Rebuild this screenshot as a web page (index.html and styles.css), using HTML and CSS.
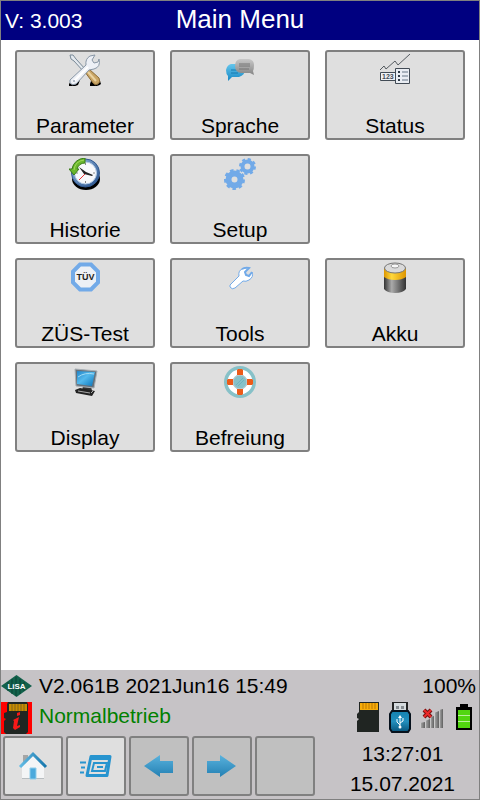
FILE: index.html
```
<!DOCTYPE html>
<html lang="de">
<head>
  <meta charset="UTF-8">
  <meta name="viewport" content="width=device-width, initial-scale=1.0">
  <title>Main Menu</title>
  <link rel="stylesheet" href="styles.css">
</head>
<body>
  <header class="titlebar">
    <span class="version">V: 3.003</span>
    <h1>Main Menu</h1>
  </header>

  <main class="menu">
    <button class="tile" type="button">
      <svg class="icon" viewBox="0 0 32 32" aria-hidden="true">
        <path d="M0 30l3-4h8l-2 5q-4 2-9 1zM21 30l1-3h9l1 3q-3 3-11 2z" fill="#000"/>
        <path d="M1 1l3 0 3 4 10 11-2 2L5 7 2 5z" fill="#e4e9ee" stroke="#788896"/>
        <path d="M16 18l4-3 10 9q2 4-1 6t-5-1z" fill="#c9a565" stroke="#8c6c38"/>
        <path d="M19 18l8 9" stroke="#ead2a0" stroke-width="2"/>
        <path d="M1 26L17 11q-1-6 4-9l5-1-3 5 2 3 4-1 1-3q2 8-5 10l-5 1L7 30q-4 2-6-1z" fill="#edf0f6" stroke="#8997a6"/>
        <path d="M4 28l15-15" stroke="#fff" stroke-width="2"/>
        <circle cx="5" cy="27" r="1" fill="#99a4b5"/>
      </svg>
      <span>Parameter</span>
    </button>
    <button class="tile" type="button">
      <svg class="icon" viewBox="0 0 32 32" aria-hidden="true">
        <defs>
          <linearGradient id="bubbleBlue" x1="0" y1="0" x2="0" y2="1"><stop offset="0" stop-color="#65c6ec"/><stop offset="1" stop-color="#1687c4"/></linearGradient>
          <linearGradient id="bubbleGray" x1="0" y1="0" x2="0" y2="1"><stop offset="0" stop-color="#c8c8c8"/><stop offset="1" stop-color="#858585"/></linearGradient>
        </defs>
        <path d="M7 10h9q5 1 5 6t-6 7H8l-4 4v-5q-2-2-2-6 1-5 5-6z" fill="url(#bubbleBlue)"/>
        <path d="M7 16h7M7 19h7" stroke="#167bb0"/>
        <path d="M16 5h9q5 1 5 6 0 4-1 6l1 4-4-2h-9q-6-1-6-7 0-6 5-7z" fill="url(#bubbleGray)"/>
        <path d="M15 10h11M15 12h11M15 15h10" stroke="#777"/>
      </svg>
      <span>Sprache</span>
    </button>
    <button class="tile" type="button">
      <svg class="icon" viewBox="0 0 32 32" aria-hidden="true">
        <path d="M1 16l4-4 2 3 9-8 3 4L31 0" fill="none" stroke="#555b60"/>
        <path d="M1.500 18.500h15v8h-15z" fill="#eef1f5" stroke="#424b55"/>
        <text class="digits" x="3" y="25">123</text>
        <path d="M16.500 14.500h14v15h-14z" fill="#e9edf3" stroke="#424b55"/>
        <path d="M19 18h2M19 22h2M19 26h2" stroke="#303b47" stroke-width="2"/>
        <path d="M23 18h6M23 22h6M23 26h6" stroke="#657585"/>
      </svg>
      <span>Status</span>
    </button>
    <button class="tile" type="button">
      <svg class="icon" viewBox="0 0 32 32" aria-hidden="true">
        <defs><linearGradient id="rim" x1="0" y1="0" x2="1" y2="1"><stop offset="0" stop-color="#93b8de"/><stop offset="1" stop-color="#244e8a"/></linearGradient></defs>
        <ellipse cx="17" cy="21" rx="14" ry="11" fill="#000"/>
        <circle cx="16.500" cy="15" r="14" fill="url(#rim)" stroke="#345b91"/>
        <circle cx="16.500" cy="15" r="11" fill="#f8f9fb" stroke="#b1c9e4"/>
        <path d="M16.500 5v2M16.500 23v2M24 15h2M7 15h2" stroke="#888"/>
        <path d="M16 16l-6 6" stroke="#e33"/>
        <path d="M10 9l7 5 7 3-1 1-8-2z" fill="#222"/>
        <path d="M16 0v5Q10 5 8 11h2l-5 6-5-6h3Q5 1 16 0z" fill="#6ab62c" stroke="#397d18"/>
        <path d="M15 2Q6 3 5 12" fill="none" stroke="#a0db5a"/>
      </svg>
      <span>Historie</span>
    </button>
    <button class="tile" type="button">
      <svg class="icon" viewBox="0 0 32 32" aria-hidden="true">
        <g fill="none" stroke="#72aae8">
          <circle cx="10.500" cy="21.500" r="6" stroke-width="6"/>
          <circle cx="10.500" cy="21.500" r="9" stroke-width="3" stroke-dasharray="3.500 2.783"/>
          <circle cx="23.500" cy="8.500" r="5" stroke-width="4"/>
          <circle cx="23.500" cy="8.500" r="7" stroke-width="3" stroke-dasharray="3 2.498"/>
        </g>
      </svg>
      <span>Setup</span>
    </button>
    <button class="tile tile-left" type="button">
      <svg class="icon" viewBox="0 0 32 32" aria-hidden="true">
        <path d="M11 2.500h11l7 7v11l-7 7H11l-7-7v-11z" fill="#edf0f5" stroke="#72aae8" stroke-width="4"/>
        <text class="tuv" x="16.500" y="18">TÜV</text>
      </svg>
      <span>ZÜS-Test</span>
    </button>
    <button class="tile" type="button">
      <svg class="icon" viewBox="0 0 32 32" aria-hidden="true">
        <path d="M6 23l9-9q-1-5 3-7 3-2 7-1l-4 4 1 3 3 1 3-4q2 5-3 8-3 2-6 1l-8 7q-3 2-5-1z" fill="#fff" stroke="#72aae8"/>
        <path d="M18 7q3-2 7-1l-4 4 1 3 3 1 3-4" fill="none" stroke="#72aae8" stroke-width="2"/>
      </svg>
      <span>Tools</span>
    </button>
    <button class="tile" type="button">
      <svg class="icon" viewBox="0 0 32 32" aria-hidden="true">
        <defs>
          <linearGradient id="cellDark"><stop offset="0" stop-color="#333"/><stop offset=".35" stop-color="#aaa"/><stop offset="1" stop-color="#333"/></linearGradient>
          <linearGradient id="cellGold"><stop offset="0" stop-color="#dc9600"/><stop offset=".35" stop-color="#ffd83c"/><stop offset="1" stop-color="#dd9500"/></linearGradient>
        </defs>
        <path d="M5 15v12q3 4 11 4t11-4V15z" fill="url(#cellDark)"/>
        <path d="M5 6v9q4 3 11 3t11-3V6z" fill="url(#cellGold)"/>
        <ellipse cx="16" cy="6" rx="10.500" ry="5" fill="#dadada" stroke="#777"/>
        <ellipse cx="16" cy="4" rx="4" ry="2" fill="#f7f7f7" stroke="#999"/>
      </svg>
      <span>Akku</span>
    </button>
    <button class="tile" type="button">
      <svg class="icon" viewBox="0 0 32 32" aria-hidden="true">
        <defs><linearGradient id="screen" x1="0" y1="0" x2="1" y2="1"><stop offset="0" stop-color="#2185c9"/><stop offset=".45" stop-color="#54b9ec"/><stop offset="1" stop-color="#0873b9"/></linearGradient></defs>
        <path d="M14 20h8l1 5H13z" fill="#333"/>
        <path d="M6 24l5-2 15 3-3 5L7 27z" fill="#222"/>
        <path d="M9 25l12 2M22 27l3-3" stroke="#aaa"/>
        <path d="M6 3l22 2-3 17-18-2z" fill="#65717b" stroke="#a9b0b5"/>
        <path d="M8 5l18 1-3 14-15-2z" fill="url(#screen)"/>
        <path d="M9 11q7-5 16-3" fill="none" stroke="#a2dcf5"/>
      </svg>
      <span>Display</span>
    </button>
    <button class="tile" type="button">
      <svg class="icon" viewBox="0 0 32 32" aria-hidden="true">
        <circle cx="16" cy="16" r="16" fill="#87c1c8"/>
        <circle cx="16" cy="16" r="10" fill="none" stroke="#fff" stroke-width="5"/>
        <circle cx="16" cy="16" r="7" fill="none" stroke="#c6cdd2"/>
        <path d="M12 19l7-7M14 20l6-6" stroke="#70b3bd"/>
        <path d="M13 4l1-1h4l1 1v5h-6zM13 23h6v5l-1 1h-4l-1-1zM4 13h5v6H4l-1-1v-4zM23 13h5l1 1v4l-1 1h-5z" fill="#ed5b19"/>
      </svg>
      <span>Befreiung</span>
    </button>
  </main>

  <footer class="statusbar">
    <div class="row">
      <svg class="icon" viewBox="0 0 32 32" role="img" aria-label="LiSA">
        <path d="M0 16L15.500 5 31 16 15.500 27z" fill="#12614b"/>
        <path d="M7 12v9M11 9v15M15 7v19M19 9v15M23 12v9" stroke="#0a4435"/>
        <text class="lisa" x="15.500" y="19">LiSA</text>
      </svg>
      <span class="firmware">V2.061B 2021Jun16 15:49</span>
      <span>100%</span>
    </div>
    <div class="row">
      <svg class="icon" viewBox="0 0 32 32" role="img" aria-label="SD-Karte Info">
        <path d="M0 0h31v32H0z" fill="#f00"/>
        <path d="M7 0h19l1 2v28l-2 2H5l-2-2V19l2-2-2-1v-5l3-1V2z" fill="#202622"/>
        <path d="M8 2h18v7H8z" fill="#c88d00"/>
        <path d="M11 2v7M14 2v7M17 2v7M20 2v7M23 2v7" stroke="#80631a"/>
        <path d="M16 11l3-1v3l-3 1zM12 18l6-3-2 9 3-1v2l-5 3-2-2 1-7z" fill="#f71919"/>
      </svg>
      <span class="mode">Normalbetrieb</span>
      <div class="indicators">
        <svg class="indicator" viewBox="0 0 24 32" role="img" aria-label="SD-Karte">
          <path d="M3 0h20v30H1V19l2-2-2-1v-4l2-2z" fill="#202522"/>
          <path d="M4 1h18v7H4z" fill="#f6ac08"/>
          <path d="M7 1v6M10 1v6M13 1v6M16 1v6M19 1v6" stroke="#bd7600"/>
        </svg>
        <svg class="indicator" viewBox="0 0 24 32" role="img" aria-label="USB">
          <defs><linearGradient id="usb" x1="0" y1="0" x2="0" y2="1"><stop offset="0" stop-color="#1482b0"/><stop offset=".5" stop-color="#238fbd"/><stop offset="1" stop-color="#07547b"/></linearGradient></defs>
          <path d="M5 0h14v11H5z" fill="#d5dadd" stroke="#222" stroke-width="2"/>
          <path d="M8 4h3v3H8zM13 4h3v3h-3z" fill="#858b90"/>
          <path d="M4 9h16l2 3v15l-2 3H4l-2-3V12z" fill="url(#usb)" stroke="#06111c" stroke-width="2"/>
          <path d="M12 25V15M12 23l-3-3v-3M12 21l3-2v-3" fill="none" stroke="#fff"/>
          <path d="M10 16l2-3 2 3z" fill="#fff"/>
          <circle cx="12" cy="25" r="1.500" fill="#fff"/>
        </svg>
        <svg class="indicator" viewBox="0 0 24 32" role="img" aria-label="Kein Signal">
          <defs><linearGradient id="bars"><stop offset="0" stop-color="#e4e4e4"/><stop offset=".3" stop-color="#999"/><stop offset="1" stop-color="#606060"/></linearGradient></defs>
          <g fill="url(#bars)">
            <path d="M0 21l5-1v6H0z"/>
            <path d="M5 19l5-2v9H5z"/>
            <path d="M10 15l4-1v12h-4z"/>
            <path d="M14 11l5-2v17h-5z"/>
            <path d="M19 8l4-1v19h-4z"/>
          </g>
          <path d="M4 8l7 7M11 8l-7 7" stroke="#711" stroke-width="4"/>
          <path d="M4 8l7 7M11 8l-7 7" stroke="#eb2929" stroke-width="2"/>
        </svg>
        <svg class="indicator" viewBox="0 0 24 32" role="img" aria-label="Akku voll">
          <path d="M8 2h8v3h4v23H4V5h4z" fill="#000"/>
          <path d="M6 8h12v5H6zM6 14h12v5H6zM6 20h12v6H6z" fill="#51d610"/>
          <path d="M6 13.500h12M6 19.500h12" stroke="#b9ef9c"/>
        </svg>
      </div>
    </div>
    <div class="row">
      <nav class="keys">
        <button class="key" type="button" aria-label="Home">
          <svg class="icon" viewBox="0 0 32 32" aria-hidden="true">
            <defs><linearGradient id="roof"><stop offset="0" stop-color="#64bce5"/><stop offset="1" stop-color="#1676ac"/></linearGradient></defs>
            <path d="M6 5h5v9H6z" fill="#a5a5a5"/>
            <path d="M5 16L16 6l11 10v13H5z" fill="#f4f5f6"/>
            <path d="M5 28.500h22" stroke="#b8bdc0"/>
            <path d="M13 18h6v11h-6z" fill="#4ba9dc" stroke="#8fcdea"/>
            <path d="M3 17L16 4l13 13" fill="none" stroke="url(#roof)" stroke-width="3"/>
          </svg>
        </button>
        <button class="key" type="button" aria-label="Schnellzugriff">
          <svg class="icon" viewBox="0 0 32 32" aria-hidden="true">
            <path d="M11 6.500h19L27 25.500H7z" fill="none" stroke="#2794cf" stroke-width="3" stroke-linejoin="round"/>
            <path d="M10 8h21" stroke="#2794cf" stroke-width="4"/>
            <path d="M14 13h13l-2 8H12z" fill="none" stroke="#2794cf" stroke-width="2"/>
            <path d="M17 17h6M0 12.500h6M1 17.500h4M0 22.500h4" stroke="#2794cf" stroke-width="2"/>
          </svg>
        </button>
        <button class="key" type="button" aria-label="Zurück" disabled>
          <svg class="icon" viewBox="0 0 32 32" aria-hidden="true">
            <defs><linearGradient id="arrow" x1="0" y1="0" x2="0" y2="1"><stop offset="0" stop-color="#59b2dd"/><stop offset="1" stop-color="#2480b3"/></linearGradient></defs>
            <path d="M1 16L17 5v6h13v12H17v4z" fill="url(#arrow)"/>
          </svg>
        </button>
        <button class="key" type="button" aria-label="Weiter" disabled>
          <svg class="icon" viewBox="0 0 32 32" aria-hidden="true">
            <path d="M30 16L14 5v6H1v12h13v4z" fill="url(#arrow)"/>
          </svg>
        </button>
        <button class="key" type="button" aria-label="Leer" disabled></button>
      </nav>
      <div class="clock">
        <time datetime="13:27:01">13:27:01</time>
        <time datetime="2021-07-15">15.07.2021</time>
      </div>
    </div>
  </footer>
</body>
</html>
```
FILE: styles.css
```
* {
  box-sizing: border-box;
}
body {
  display: flex;
  flex-direction: column;
  min-height: 100vh;
  margin: 0;
  border: 1px solid #808080;
  background: #fff;
  color: #000;
  font-family: "Liberation Sans", Arial, sans-serif;
  font-size: 21px;
  line-height: 24px;
}
button {
  padding: 0;
  border: 2px solid #808080;
  border-radius: 3px;
  background: #dfdfdf;
  color: #000;
  font: inherit;
}
.icon {
  display: block;
  flex: none;
  width: 32px;
  height: 32px;
}
.titlebar {
  display: grid;
  grid-template-columns: 1fr auto 1fr;
  align-items: center;
  padding: 0 4px;
  height: 39px;
  background: #000080;
  color: #fff;
}
.titlebar h1 {
  margin: 0;
  padding-bottom: 4px;
  font-size: 26px;
  font-weight: normal;
}
.menu {
  display: grid;
  grid-template-columns: repeat(3, 1fr);
  gap: 14px 15px;
  padding: 10px 14px;
}
.tile {
  display: flex;
  flex-direction: column;
  align-items: center;
  justify-content: space-between;
  height: 90px;
  padding: 2px 0 0;
}
.tile-left {
  grid-column: 1;
}
.digits {
  font-size: 7px;
  font-weight: bold;
  fill: #424b55;
}
.tuv {
  font-size: 9px;
  font-weight: bold;
  text-anchor: middle;
  fill: #222;
}
.lisa {
  font-size: 8px;
  font-weight: bold;
  text-anchor: middle;
  fill: #fff;
}

/* bottom bar */
.statusbar {
  margin-top: auto;
  padding-bottom: 3px;
  background: #c6c3c6;
}
.row {
  display: flex;
  align-items: center;
  gap: 6px;
  padding-right: 3px;
}
.firmware,
.mode {
  flex: 1;
}
.mode {
  padding-bottom: 4px;
  color: #008000;
}
.indicators {
  display: flex;
  gap: 8px;
}
.indicator {
  width: 24px;
  height: 32px;
}
.keys {
  display: flex;
  gap: 3px;
  padding: 2px 0 0 2px;
}
.key {
  display: flex;
  align-items: center;
  justify-content: center;
  width: 60px;
  height: 60px;
}
.key:disabled {
  background: #c0c0c0;
}
.clock {
  display: flex;
  flex: 1;
  flex-direction: column;
  gap: 6px;
  padding: 8px 0 0 8px;
  text-align: center;
}
```
